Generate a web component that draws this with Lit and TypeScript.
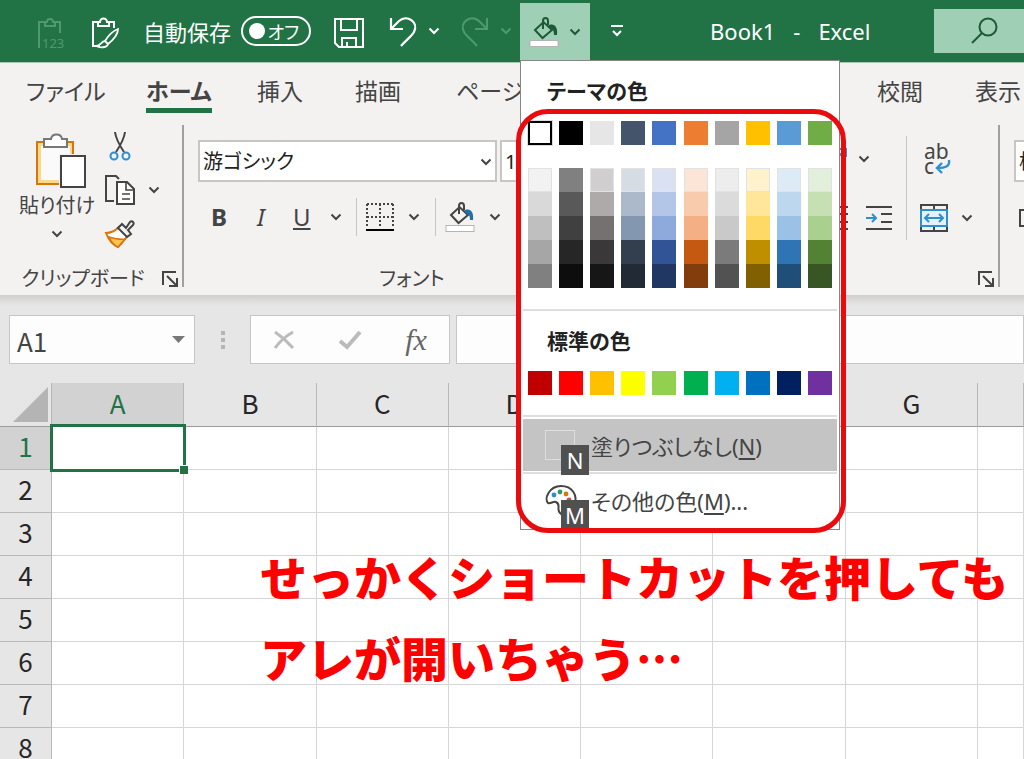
import { LitElement, html, css, svg } from "lit";
import { customElement, state } from "lit/decorators.js";

const THEME = ["#ffffff", "#000000", "#e7e6e6", "#44546a", "#4472c4", "#ed7d31", "#a5a5a5", "#ffc000", "#5b9bd5", "#70ad47"];
const SHADES = [
  ["#f2f2f2", "#d9d9d9", "#bfbfbf", "#a6a6a6", "#808080"],
  ["#808080", "#595959", "#404040", "#262626", "#0d0d0d"],
  ["#d0cece", "#aeaaaa", "#757171", "#3a3838", "#161616"],
  ["#d6dce4", "#acb9ca", "#8497b0", "#333f4f", "#222b35"],
  ["#d9e1f2", "#b4c6e7", "#8ea9db", "#305496", "#203764"],
  ["#fce4d6", "#f8cbad", "#f4b084", "#c65911", "#833c0c"],
  ["#ededed", "#dbdbdb", "#c9c9c9", "#7b7b7b", "#525252"],
  ["#fff2cc", "#ffe699", "#ffd966", "#bf8f00", "#806000"],
  ["#ddebf7", "#bdd7ee", "#9bc2e6", "#2f75b5", "#1f4e78"],
  ["#e2efda", "#c6e0b4", "#a9d08e", "#548235", "#375623"],
];
const STANDARD = ["#c00000", "#ff0000", "#ffc000", "#ffff00", "#92d050", "#00b050", "#00b0f0", "#0070c0", "#002060", "#7030a0"];
const COLUMNS = ["A", "B", "C", "D", "E", "F", "G", ""];
const ROWS = [1, 2, 3, 4, 5, 6, 7, 8];

const icon = (w: number, h: number, body: unknown) =>
  html`<svg class="icon" width=${w} height=${h} viewBox="0 0 ${w} ${h}" fill="none" stroke="currentColor" stroke-width="2" aria-hidden="true">${body}</svg>`;

const chevron = () => icon(12, 8, svg`<path d="M1.5 1.5 6 6l4.500-4.500"/>`);
const pasteValues = () => icon(28, 32, svg`
  <path d="M2 31V5h7M17 5h6v11M8 9h10V5h-2a3 3 0 0 0-6 0H8z"/>
  <text x="5" y="31" font-size="13" stroke="none" fill="currentColor">123</text>`);
const pasteFormat = () => icon(28, 32, svg`
  <path d="M9 29H2V5h5M18 5h5v6M7 9h11V5h-2a3.500 3.500 0 0 0-7 0H7z"/>
  <path d="M27 12c-5 2-10 7-13 12l3 3c5-4 10-9 10-15zM14 24c-4 0-4 5-9 5 4 2 11 2 12-2" stroke-width="1.800"/>`);
const save = () => icon(30, 30, svg`<path d="M1 1h28v28H5l-4-4zM7 1v11h16V1M8 29v-9h14v9M13 24v5"/>`);
const undo = () => icon(28, 36, svg`<path d="M2 5v11h12M2 16 10 8c8-7 20 1 15 11-2 4-8 8-13 14" stroke-width="2.200"/>`);
const redo = () => icon(28, 36, svg`<path d="M26 5v11H14M26 16 18 8C10 1-2 9 3 19c2 4 8 8 13 14" stroke-width="2"/>`);
const bucket = (accent: string) => icon(30, 30, svg`
  <path d="M6 13 14.500 5l8.500 8-9.500 8zM14 12V4c0-4 5-4 5 0v4" stroke-width="2"/>
  <path d="M20 8c6-2 9 3 8 10h-3c0-4-1-7-5-7z" fill=${accent} stroke="none"/>
  <rect x="1" y="23.500" width="28" height="6" fill="#fff" stroke="#b5b5b5" stroke-width="1"/>`);
const customize = () => icon(14, 14, svg`<path d="M1 2h12M3 7l4 4 4-4"/>`);
const search = () => icon(28, 28, svg`<circle cx="18" cy="10" r="8.500"/><path d="M12 16 2 26"/>`);
const paste = () => icon(60, 56, svg`<g transform="translate(7 0)">
  <path d="M3 9h37v42H3z" fill="#fcd98a" stroke="none"/>
  <path d="M7 13h29v34H7z" fill="#fafafa" stroke="none"/>
  <path d="M39 21V9H3v42h22" stroke="#d8760e"/>
  <path d="M10 6h7c1-6 10-6 11 0h5v8H10z" fill="#fff" stroke="#777"/>
  <path d="M25 21h28v35H25z" fill="#f3f2f1" stroke="none"/>
  <path d="M27 23h24v31H27z" fill="#fff" stroke="#444"/></g>`);
const cut = () => icon(22, 30, svg`
  <path d="M6 1c1 8 5 14 9 20M16 1c-1 8-5 14-9 20"/>
  <circle cx="5" cy="25" r="3.500" stroke="#2e8fcf"/><circle cx="17" cy="25" r="3.500" stroke="#2e8fcf"/>`);
const copy = () => icon(30, 30, svg`
  <path d="M9 26H1V1h10l3 3"/>
  <path d="M12 7h10l7 7v15H12z" fill="#fff"/><path d="M21 7v8h8M17 19h8M17 24h8" stroke-width="1.600"/>`);
const brush = () => icon(30, 28, svg`
  <path d="M1 13C7 13 11 10 14 7l9 9c-4 3-5 7-10 11C8 25 4 21 1 13z" fill="#fff" stroke="#d8760e"/>
  <path d="M4 17c7 2 11 3 16 2l-7 8c-4-2-7-5-9-10z" fill="#fcc14f" stroke="#d8760e" stroke-width="1.500"/>
  <path d="m13 8 4-4 4 4 4-6c2-2 5 1 3 3l-5 5 3 4-4 3z" fill="#f3f2f1"/>`);
const launcher = () => icon(16, 16, svg`<path d="M1 14V1h13M5 5l9 9M15 7v8H7"/>`);
const borders = () => icon(28, 28, svg`
  <path d="M1 1h26M1 14h26M1 1v24M14 1v24M27 1v24" stroke-dasharray="2 2"/>
  <path d="M0 27h28" stroke="#000"/>`);
const indentLess = () => icon(26, 24, svg`<path d="M0 1h26M15 8h11M15 16h11M0 23h26"/><path d="M11 12H1M5 8l-4 4 4 4" stroke="#2e8fcf"/>`);
const indentMore = () => icon(26, 24, svg`<path d="M0 1h26M15 8h11M15 16h11M0 23h26"/><path d="M0 12h10M6 8l4 4-4 4" stroke="#2e8fcf"/>`);
const orientation = () => icon(26, 26, svg`<path d="M4 24 24 4M17 3h8v8" stroke="#2e8fcf"/>`);
const wrapText = () => icon(28, 32, svg`
  <text x="0" y="16" font-size="21" stroke="none" fill="currentColor">ab</text>
  <text x="0" y="31" font-size="21" stroke="none" fill="currentColor">c</text>
  <path d="M25 17c1 6-3 8-12 8M18 20l-5 5 5 5" stroke="#2e8fcf" stroke-width="2.400"/>`);
const merge = () => icon(28, 28, svg`
  <path d="M1 1h26v26H1zM14 1v5M14 22v5"/>
  <path d="M1 6h26v16H1z" fill="#e4f3fb" stroke="#2e8fcf"/><path d="M5 14h18M9 10l-4 4 4 4M19 10l4 4-4 4" stroke="#2e8fcf"/>`);
const currency = () => icon(30, 18, svg`<path d="M1 1h28v16H1z"/><circle cx="15" cy="9" r="4"/>`);
const cancel = () => icon(22, 20, svg`<path d="M2 2c6 4 12 9 18 16M20 2C13 6 7 11 2 18" stroke-width="3"/>`);
const accept = () => icon(24, 20, svg`<path d="m2 11 7 6L22 2" stroke-width="4"/>`);
const palette = () => icon(32, 30, svg`
  <path d="M16 29c-6-4 1-9-5-12-3-1-5 2-8 1C-1 14 4 1 16 1s16 10 14 16c-1 5-7 11-14 12z" fill="#fff"/>
  <g stroke="none"><circle cx="9" cy="10" r="2.400" fill="#2e8fcf"/><circle cx="15" cy="7" r="2.400" fill="#2c9c5a"/><circle cx="21" cy="9" r="2.400" fill="#d8760e"/><circle cx="24" cy="15" r="2.400" fill="#d64550"/></g>`);

@customElement("fill-menu")
class FillMenu extends LitElement {
  static styles = css`
    :host { display: block; box-sizing: border-box; padding: 0 2px 3px; background: #fff; border: 1px solid #868686; color: #222; }
    * { box-sizing: border-box; }
    .icon { display: block; flex: none; }
    .heading { margin: 0; padding-left: 24px; font-size: 21px; line-height: 60px; font-weight: 700; }
    .swatches { display: flex; justify-content: space-between; padding: 0 5px; }
    .swatch { display: block; width: 24px; height: 24px; padding: 0; border: 0; }
    .edged { box-shadow: inset 0 0 0 1px #e2e2e2; }
    .current { border: 2px solid #000; outline: 1px solid #ddd; }
    .shades { padding-top: 23px; padding-bottom: 21px; }
    .standard { padding-bottom: 20px; }
    .rule { height: 2px; margin: 0; border: 0; background: #dedede; }
    .item { position: relative; display: flex; align-items: center; gap: 16px; width: 100%; height: 52px; padding: 0 22px; border: 0; background: none; font: inherit; font-size: 22px; color: #444; text-align: left; font-feature-settings: "palt"; }
    .active { margin: 2px 0 1px; background: #c4c4c4; }
    .none { width: 30px; height: 30px; border: 1px solid #dedede; }
    .picker { width: 30px; height: 30px; }
    .key { position: absolute; left: 38px; top: 26px; width: 28px; height: 30px; background: #505050; color: #fff; font-size: 22px; line-height: 30px; text-align: center; }
    u { text-underline-offset: 3px; }
  `;
  render() {
    return html`
      <h2 class="heading">テーマの色</h2>
      <div class="swatches">${THEME.map((c, i) => html`<button class="swatch ${i === 0 ? "current" : ""}" aria-label=${c} style="background:${c}"></button>`)}</div>
      <div class="swatches shades">${SHADES.map((col, n) => html`<div>${col.map((c, i) => html`<button class="swatch ${i === 0 && n !== 1 ? "edged" : ""}" aria-label=${c} style="background:${c}"></button>`)}</div>`)}</div>
      <hr class="rule">
      <h2 class="heading">標準の色</h2>
      <div class="swatches standard">${STANDARD.map((c) => html`<button class="swatch" aria-label=${c} style="background:${c}"></button>`)}</div>
      <hr class="rule">
      <button class="item active"><span class="none"></span><span>塗りつぶしなし(<u>N</u>)</span><span class="key">N</span></button>
      <hr class="rule">
      <button class="item"><span class="picker">${palette()}</span><span>その他の色(<u>M</u>)...</span><span class="key">M</span></button>`;
  }
}

@customElement("app-root")
class AppRoot extends LitElement {
  @state() autosave = false;

  static styles = css`
    :host { display: flex; flex-direction: column; height: 100vh; overflow: hidden; background: #e6e6e6; color: #444; font-family: "Noto Sans", "Noto Sans CJK JP", sans-serif; font-size: 22px; font-feature-settings: "palt"; }
    * { box-sizing: border-box; }
    button, select, input { font: inherit; color: inherit; font-feature-settings: inherit; }
    button { display: flex; align-items: center; justify-content: center; padding: 0; border: 0; background: none; }
    .icon { display: block; flex: none; overflow: visible; }

    .titlebar { flex: none; display: flex; align-items: center; height: 63px; padding-left: 24px; background: #217346; border-bottom: 1px solid #a9c7b6; color: #fff; white-space: nowrap; }
    .tool { width: 54px; height: 48px; padding-top: 4px; }
    .dim { color: #4e9a6d; }
    .autosave { display: flex; align-items: center; gap: 10px; margin: 0 15px 0 11px; }
    .switch { display: flex; align-items: center; justify-content: space-between; width: 70px; height: 30px; padding: 0 10px 0 6px; border: 2px solid #fff; border-radius: 15px; font-size: 18px; }
    .switch input { appearance: none; width: 16px; height: 16px; margin: 0; border-radius: 50%; background: #fff; }
    .save { width: 46px; height: 48px; padding-top: 4px; margin-right: 12px; }
    .history { gap: 11px; width: 60px; height: 48px; margin-right: 12px; }
    .redo { margin-right: 4px; }
    .fill { position: relative; z-index: 2; align-self: stretch; padding-top: 3px; }
    .fillbtn { gap: 10px; width: 70px; height: 58px; background: #9fcfb4; color: #1d5b38; }
    .menu { position: absolute; top: 60px; left: 0; width: 320px; }
    .ring { position: absolute; top: 109px; left: -4px; width: 330px; height: 424px; border: 5px solid #ea0b0f; border-radius: 32px; pointer-events: none; }
    .custom { width: 54px; height: 48px; }
    .title { display: flex; gap: 18px; margin: 0 0 0 66px; font-size: 22px; font-weight: 400; }
    .search { width: 90px; height: 44px; margin-left: auto; padding-right: 0; justify-content: flex-start; padding-left: 36px; background: #9fcfb4; color: #1d5b38; }

    .tabs { flex: none; display: grid; grid-template-columns: 120px 111px 98px 101px 421px 98px auto; justify-items: start; height: 55px; padding: 6px 0 0 26px; background: #f3f2f1; overflow: hidden; font-size: 23px; white-space: nowrap; }
    .tab { height: 44px; line-height: 44px; color: inherit; text-decoration: none; }
    .selected { font-weight: 700; border-bottom: 5px solid #217346; }

    .ribbon { flex: none; display: flex; height: 177px; padding: 7px 0 8px; background: #f3f2f1; white-space: nowrap; overflow: hidden; }
    .group { flex: none; display: flex; flex-direction: column; justify-content: space-between; border-right: 2px solid #a0a0a0; }
    .caption { display: flex; align-items: center; justify-content: center; height: 16px; padding: 0 4px; font-size: 20px; line-height: 16px; }
    .caption span { flex: 1; text-align: center; }
    .clipboard { width: 184px; }
    .clip { display: flex; align-items: flex-start; gap: 10px; padding: 6px 0 0 19px; }
    .paste { flex-direction: column; width: 76px; padding-top: 2px; font-size: 20px; line-height: 34px; }
    .paste .icon:last-child { margin-top: 7px; }
    .small { display: flex; flex-direction: column; gap: 14px; }
    .small button { gap: 13px; height: 30px; justify-content: flex-start; }
    .small .cut { padding-left: 4px; }
    .font { width: 458px; }
    .combos { display: flex; gap: 3px; padding: 15px 14px 0; }
    .combo { position: relative; display: block; font-size: 20px; }
    .combo select { appearance: none; width: 100%; height: 42px; padding: 0 3px; border: 2px solid #c8c6c4; border-radius: 0; background: #fff; color: #222; }
    .combo .icon { position: absolute; right: 5px; top: 18px; }
    .family { width: 299px; }
    .size { width: 72px; }
    .row { display: flex; align-items: center; height: 40px; }
    .styles { padding-left: 14px; margin-bottom: 20px; font-size: 24px; }
    .style { width: 42px; height: 40px; }
    .split { gap: 14px; height: 40px; padding: 0 15px 0 9px; }
    .split.line { padding: 0 14px 0 11px; gap: 19px; }
    .bold { font-weight: 700; }
    .italic { font-style: italic; }
    .sep { width: 1px; height: 38px; background: #c8c6c4; }

    .align { width: 358px; }
    .alignrows { display: flex; justify-content: flex-end; padding: 11px 25px 0 0; }
    .indents { display: flex; flex-direction: column; gap: 14px; align-items: flex-end; padding-right: 14px; border-right: 1px solid #c8c6c4; }
    .indents .row, .cells button { height: 45px; }
    .indents .row { gap: 18px; }
    .indents .first { gap: 11px; padding-right: 22px; }
    .cells { display: flex; flex-direction: column; align-items: flex-start; gap: 14px; padding-left: 13px; }
    .cells button { gap: 13px; }
    .cells .wrap { padding-left: 4px; }
    .number { flex: 1 1 0; min-width: 0; padding: 15px 0 0 14px; overflow: hidden; }
    .number .combo { width: 200px; }
    .number .icon { margin: 27px 0 0 5px; }
    .number .combo .icon { margin: 0; }

    .formula { flex: none; display: flex; align-items: stretch; height: 88px; padding: 20px 0 19px 9px; background: linear-gradient(#cfcecd, #e6e6e6 10px); }
    .box { display: flex; align-items: center; background: #fdfdfd; border: 1px solid #c6c6c6; }
    .name { width: 186px; padding: 0 9px 0 7px; }
    .name input { flex: 1; min-width: 0; padding: 2px 0 0; border: 0; background: none; font-family: "Noto Sans CJK JP", sans-serif; font-size: 26px; }
    .caret { width: 13px; height: 7px; background: #777; clip-path: polygon(0 0, 100% 0, 50% 100%); }
    .dots { display: flex; flex-direction: column; align-items: center; justify-content: center; gap: 3px; width: 55px; }
    .dots i { width: 4px; height: 4px; background: #b5b5b5; }
    .actions { width: 200px; margin-right: 6px; color: #bbb; }
    .actions button { flex: 1; height: 100%; }
    .actions .fx { color: #666; font: italic 700 30px "Liberation Serif", serif; font-weight: 400; }
    .entry { flex: 1; min-width: 0; padding: 0 8px; border-radius: 0; }

    .sheet { position: relative; flex: 1; min-height: 0; overflow: hidden; }
    table { width: 100%; table-layout: fixed; border-collapse: separate; border-spacing: 0; font-family: "Noto Sans CJK JP", sans-serif; font-size: 26px; line-height: 30px; background: #fff; }
    th, td { height: 43px; padding: 0; border: 0 solid #d6d6d6; border-width: 0 1px 1px 0; font-weight: 400; overflow: hidden; }
    th { padding-bottom: 4px; background: #e6e6e6; color: #262626; border-color: #b8b8b8; }
    thead th { border-bottom-color: #9b9b9b; height: 44px; }
    .rowhead { width: 52px; padding-bottom: 0; }
    .rest { width: 46px; }
    .on { background: #d2d2d2; color: #217346; }
    .corner { width: 35px; height: 35px; margin-left: 13px; background: #b4b4b4; clip-path: polygon(100% 0, 100% 100%, 0 100%); }
    .cell { position: relative; overflow: visible; }
    .cursor { position: absolute; z-index: 1; inset: -3px -3px -3px -2px; border: 3px solid #217346; }
    .handle { position: absolute; right: -5px; bottom: -5px; width: 9px; height: 9px; background: #217346; border: 1px solid #fff; border-width: 1px 0 0 1px; }
    .note { position: absolute; z-index: 1; left: 260px; top: 152px; margin: 0; color: #ff0000; font-family: "Noto Sans CJK JP", sans-serif; font-size: 47px; font-weight: 900; line-height: 81px; font-feature-settings: normal; white-space: nowrap; }
  `;

  render() {
    return html`
      <header class="titlebar">
        <button class="tool dim" aria-label="値の貼り付け">${pasteValues()}</button>
        <button class="tool" aria-label="書式の貼り付け">${pasteFormat()}</button>
        <label class="autosave">自動保存
          <span class="switch"><input type="checkbox" role="switch" .checked=${this.autosave} @change=${(e: Event) => (this.autosave = (e.target as HTMLInputElement).checked)}>${this.autosave ? "オン" : "オフ"}</span>
        </label>
        <button class="save" aria-label="上書き保存">${save()}</button>
        <button class="history" aria-label="元に戻す">${undo()}${chevron()}</button>
        <button class="history redo dim" aria-label="やり直し">${redo()}${chevron()}</button>
        <div class="fill">
          <button class="fillbtn" aria-label="塗りつぶしの色">${bucket("#1d5b38")}${chevron()}</button>
          <fill-menu class="menu"></fill-menu>
          <div class="ring"></div>
        </div>
        <button class="custom" aria-label="クイック アクセス ツール バーのカスタマイズ">${customize()}</button>
        <h1 class="title"><span>Book1</span><span>-</span><span>Excel</span></h1>
        <button class="search" aria-label="検索">${search()}</button>
      </header>
      <nav class="tabs">
        ${["ファイル", "ホーム", "挿入", "描画", "ページ", "校閲", "表示"].map(
          (t) => html`<a class="tab ${t === "ホーム" ? "selected" : ""}" href="#">${t}</a>`)}
      </nav>
      <section class="ribbon">
        <div class="group clipboard">
          <div class="clip">
            <button class="paste">${paste()}<span>貼り付け</span>${chevron()}</button>
            <div class="small">
              <button class="cut" aria-label="切り取り">${cut()}</button>
              <button aria-label="コピー">${copy()}${chevron()}</button>
              <button aria-label="書式のコピー">${brush()}</button>
            </div>
          </div>
          <div class="caption"><span>クリップボード</span>${launcher()}</div>
        </div>
        <div class="group font">
          <div class="combos">
            <label class="combo family"><select aria-label="フォント"><option>游ゴシック</option></select>${chevron()}</label>
            <label class="combo size"><select aria-label="フォント サイズ"><option>11</option></select>${chevron()}</label>
          </div>
          <div class="row styles">
            <button class="style bold">B</button>
            <button class="style italic">I</button>
            <button class="split line"><u>U</u>${chevron()}</button>
            <span class="sep"></span>
            <button class="split" aria-label="罫線">${borders()}${chevron()}</button>
            <span class="sep"></span>
            <button class="split" aria-label="塗りつぶし">${bucket("#1f6fa8")}${chevron()}</button>
          </div>
          <div class="caption"><span>フォント</span></div>
        </div>
        <div class="group align">
          <div class="alignrows">
            <div class="indents">
              <div class="row first">${orientation()}${chevron()}</div>
              <div class="row">${indentLess()}${indentMore()}</div>
            </div>
            <div class="cells">
              <button class="wrap" aria-label="折り返して全体を表示する">${wrapText()}</button>
              <button aria-label="セルを結合して中央揃え">${merge()}${chevron()}</button>
            </div>
          </div>
          <div class="caption"><span>配置</span>${launcher()}</div>
        </div>
        <div class="number">
          <label class="combo"><select aria-label="表示形式"><option>標準</option></select>${chevron()}</label>
          ${currency()}
        </div>
      </section>
      <section class="formula">
        <div class="box name"><input aria-label="名前ボックス" .value=${"A1"}><span class="caret"></span></div>
        <div class="dots"><i></i><i></i><i></i></div>
        <div class="box actions">
          <button aria-label="キャンセル">${cancel()}</button>
          <button aria-label="入力">${accept()}</button>
          <button class="fx" aria-label="関数の挿入">fx</button>
        </div>
        <input class="box entry" aria-label="数式バー">
      </section>
      <main class="sheet">
        <table>
          <thead><tr>
            <th class="rowhead"><div class="corner"></div></th>
            ${COLUMNS.map((c) => html`<th class="${c === "A" ? "on" : ""} ${c ? "" : "rest"}">${c}</th>`)}
          </tr></thead>
          <tbody>
            ${ROWS.map((r) => html`<tr>
              <th class=${r === 1 ? "on" : ""}>${r}</th>
              ${COLUMNS.map((c) => r === 1 && c === "A"
                ? html`<td class="cell"><div class="cursor"><span class="handle"></span></div></td>`
                : html`<td></td>`)}
            </tr>`)}
          </tbody>
        </table>
        <p class="note">せっかくショートカットを押しても<br>アレが開いちゃう…</p>
      </main>`;
  }
}
